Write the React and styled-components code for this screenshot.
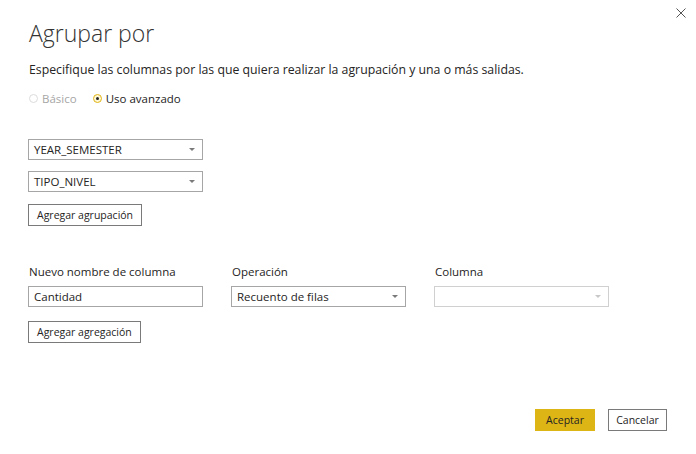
import React, { useState } from 'react';
import styled, { createGlobalStyle } from 'styled-components';

const GlobalStyle = createGlobalStyle`
  html, body {
    margin: 0;
    padding: 0;
    background: #ffffff;
  }
  body {
    font-family: "Open Sans", "Noto Sans", sans-serif;
    color: #252423;
  }
`;

const Dialog = styled.div`
  position: relative;
  width: 696px;
  height: 454px;
  box-sizing: border-box;
  padding: 15px 29px 0 28px;
  display: flex;
  flex-direction: column;
  background: #ffffff;
`;

const CloseButton = styled.button`
  position: absolute;
  top: 6px;
  right: 8px;
  width: 14px;
  height: 14px;
  padding: 0;
  border: none;
  background: transparent;
  display: flex;
  align-items: center;
  justify-content: center;
`;

const Title = styled.h1`
  margin: 0 0 0 1px;
  font-size: 23px;
  font-weight: 300;
  line-height: 36px;
  color: #333333;
`;

const Description = styled.p`
  margin: 10px 0 0 1px;
  font-size: 12.3px;
  line-height: 18px;
  color: #252423;
`;

const RadioRow = styled.div`
  display: flex;
  align-items: center;
  gap: 16px;
  margin: 10px 0 0 1px;
  height: 18px;
`;

const RadioLabel = styled.label`
  display: flex;
  align-items: center;
  gap: 4px;
  font-size: 11.5px;
  color: ${(p) => (p.disabled ? '#a6a6a6' : '#252423')};
`;

const RadioDot = styled.span`
  width: 9px;
  height: 9px;
  border-radius: 50%;
  box-sizing: border-box;
  border: 1px solid ${(p) => (p.checked ? '#e0b416' : '#dcdcdc')};
  background: ${(p) => (p.checked ? '#fff8d6' : '#ffffff')};
  display: flex;
  align-items: center;
  justify-content: center;

  &::after {
    content: '';
    width: 3px;
    height: 3px;
    border-radius: 50%;
    background: ${(p) => (p.checked ? '#252423' : 'transparent')};
  }
`;

const GroupSection = styled.div`
  display: flex;
  flex-direction: column;
  align-items: flex-start;
  gap: 11px;
  margin-top: 32px;
`;

const Select = styled.div`
  width: 175px;
  height: 21px;
  box-sizing: border-box;
  border: 1px solid ${(p) => (p.disabled ? '#d0d0d0' : '#a6a6a6')};
  display: flex;
  align-items: center;
  justify-content: space-between;
  padding: 0 7px 0 5px;
  font-size: 11.5px;
  color: #252423;
  background: #ffffff;
`;

const Caret = styled.span`
  width: 0;
  height: 0;
  border-left: 3px solid transparent;
  border-right: 3px solid transparent;
  border-top: 3px solid ${(p) => (p.disabled ? '#c8c8c8' : '#7a7a7a')};
`;

const TextInput = styled.input`
  width: 175px;
  height: 21px;
  box-sizing: border-box;
  border: 1px solid #a6a6a6;
  padding: 0 5px;
  font-family: inherit;
  font-size: 11.5px;
  color: #252423;
  outline: none;
`;

const Button = styled.button`
  height: 22px;
  box-sizing: border-box;
  padding: 0 ${(p) => (p.footer ? '0' : '8px')};
  margin-top: ${(p) => (p.nudge ? '1px' : '0')};
  border: 1px solid ${(p) => (p.primary ? '#ddb515' : '#7a7a7a')};
  background: ${(p) => (p.primary ? '#ddb515' : '#ffffff')};
  font-family: inherit;
  font-size: 10.5px;
  color: #252423;
  width: ${(p) => (p.footer ? (p.primary ? '60px' : '59px') : 'auto')};
`;

const AggSection = styled.div`
  display: grid;
  grid-template-columns: 175px 175px 175px;
  column-gap: 28px;
  row-gap: 5px;
  margin-top: 37px;
`;

const FieldLabel = styled.span`
  font-size: 11.5px;
  line-height: 18px;
  padding-left: 1px;
  color: #252423;
`;

const AggButtonRow = styled.div`
  margin-top: 12px;
`;

const Footer = styled.div`
  margin-top: auto;
  margin-bottom: 23px;
  display: flex;
  justify-content: flex-end;
  gap: 13px;
`;

const DropDown = ({ value, disabled }) => (
  <Select disabled={disabled}>
    <span>{value}</span>
    <Caret disabled={disabled} />
  </Select>
);

const App = () => {
  const [name, setName] = useState('Cantidad');

  return (
    <>
      <GlobalStyle />
      <Dialog>
        <CloseButton aria-label="Cerrar">
          <svg width="10" height="10" viewBox="0 0 10 10">
            <path d="M0.5 0.5 L9.5 9.5 M9.5 0.5 L0.5 9.5" stroke="#555" strokeWidth="1" fill="none" />
          </svg>
        </CloseButton>

        <Title>Agrupar por</Title>
        <Description>
          Especifique las columnas por las que quiera realizar la agrupación y una o más salidas.
        </Description>

        <RadioRow>
          <RadioLabel disabled>
            <RadioDot />
            Básico
          </RadioLabel>
          <RadioLabel>
            <RadioDot checked />
            Uso avanzado
          </RadioLabel>
        </RadioRow>

        <GroupSection>
          <DropDown value="YEAR_SEMESTER" />
          <DropDown value="TIPO_NIVEL" />
          <Button nudge>Agregar agrupación</Button>
        </GroupSection>

        <AggSection>
          <FieldLabel>Nuevo nombre de columna</FieldLabel>
          <FieldLabel>Operación</FieldLabel>
          <FieldLabel>Columna</FieldLabel>
          <TextInput value={name} onChange={(e) => setName(e.target.value)} />
          <DropDown value="Recuento de filas" />
          <DropDown value="" disabled />
        </AggSection>

        <AggButtonRow>
          <Button>Agregar agregación</Button>
        </AggButtonRow>

        <Footer>
          <Button primary footer>Aceptar</Button>
          <Button footer>Cancelar</Button>
        </Footer>
      </Dialog>
    </>
  );
};

export default App;
